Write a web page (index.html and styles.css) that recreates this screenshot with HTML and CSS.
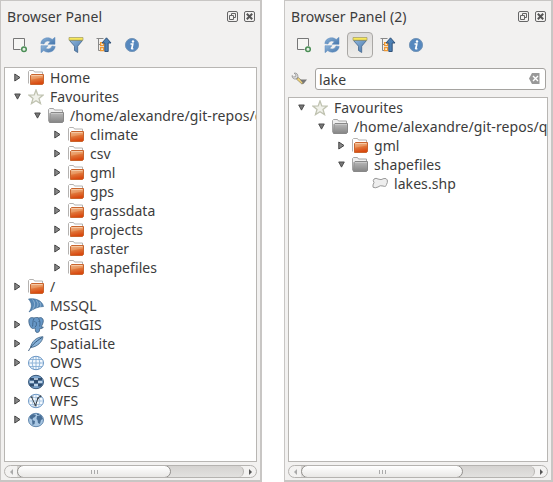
FILE: index.html
```
<!DOCTYPE html>
<html lang="en">
<head>
<meta charset="utf-8">
<title>Browser Panel</title>
<link rel="stylesheet" href="styles.css">
</head>
<body>
<svg class="defs" width="0" height="0" aria-hidden="true">
  <defs>
    <linearGradient id="orange" x1="0" y1="0" x2="0.25" y2="1"><stop offset="0" stop-color="#eeb48a"/><stop offset=".45" stop-color="#e9965f"/><stop offset=".55" stop-color="#e0763a"/><stop offset="1" stop-color="#d9480f"/></linearGradient>
    <linearGradient id="grey" x1="0" y1="0" x2="0" y2="1"><stop offset="0" stop-color="#b9b9b9"/><stop offset="1" stop-color="#858585"/></linearGradient>
    <linearGradient id="blue" x1="0" y1="0" x2="1" y2="1"><stop offset="0" stop-color="#8fb5da"/><stop offset="1" stop-color="#4475ab"/></linearGradient>
  </defs>
  <symbol id="right" viewBox="0 0 7 9"><path d="M.8 1v7L6 4.5z" fill="#888" stroke="#444"/></symbol>
  <symbol id="down" viewBox="0 0 8 9"><path d="M.8 1.6h6.4L4 7.5z" fill="#777" stroke="#444"/></symbol>
  <symbol id="folder" viewBox="0 0 16 16"><path d="M.5 13.5v-12l1-1h4l1 1.5h8v3" fill="#fff" stroke="#b4b2b0"/><path d="M2.5 5.5l1-1h12v9l-1 1h-12z" fill="url(#orange)" stroke="#c9652e"/><path d="M3.500 5.500h11" stroke="#f5c9a5"/></symbol>
  <symbol id="folder-grey" viewBox="0 0 16 16"><path d="M.5 13.5v-12l1-1h4l1 1.5h8v3" fill="#eee" stroke="#a5a5a5"/><path d="M2 5.5l1-1h12.5v9l-1 1H1.500z" fill="url(#grey)" stroke="#888"/><path d="M3 5.500h12" stroke="#c8c8c8"/></symbol>
  <symbol id="star" viewBox="0 0 16 16"><path d="M8 1l1.8 4.900 5.400.2-4.200 3.300 1.500 5.200L8 11.700l-4.500 2.900L5 9.400.8 6.100l5.400-.2z" fill="#f0f1ea" stroke="#c0c3b1" stroke-width="1.300"/></symbol>
  <symbol id="mssql" viewBox="0 0 16 16"><path d="M.5 1C7 0 14 2 15.500 8.500 10 8.500 5 11 1 14 4.500 9 4 5 .5 1z" fill="#5687b5" stroke="#39658f" stroke-width=".6"/><path d="M4.500 1.500c3 3 2.500 7 0 10M8 2.300c2.500 2 2.500 5 .7 7.200M11.500 4c1.500 1.500 1.500 3 .8 4.800" fill="none" stroke="#a9c5de" stroke-width=".7"/></symbol>
  <symbol id="postgis" viewBox="0 0 16 16"><path d="M1 2.500C2 0 5 .5 6 1c2-1 4-.5 5 0 2-1 4 0 4.300 2.500.2 2-1.300 5-2.300 6.500h2.300c-.5 1.500-2 1.700-3.500 1.500-.2 2-.4 4-2.500 4-2 0-2-2-2.100-4.500-1 .3-2.500 1-3.700 0C1.500 9 .3 5 1 2.500z" fill="#6797c6" stroke="#3c5f82" stroke-width=".8"/><path d="M6 1.500C4.500 4 5 7 4.500 9.500M10.500 1.500c1.500 2 2 5 1 8M7 10c2-1 1.500-4 1-5M6.300 4.500h1M10.500 4.500h1" fill="none" stroke="#3a5d80" stroke-width=".8"/></symbol>
  <symbol id="feather" viewBox="0 0 16 16"><path d="M2.500 11.500C3.500 6 8 1 15 .7 14.500 6 9 11 2.500 11.500z" fill="#88b2d8" stroke="#3c5f82" stroke-width=".8"/><path d="M.5 15C3 10 7 6 14 1.500" fill="none" stroke="#294c70" stroke-width=".9"/></symbol>
  <symbol id="globe" viewBox="0 0 16 16"><ellipse cx="8" cy="8" rx="7.500" ry="6.700" fill="#f4f9fe" stroke="#6995c4"/><path d="M8 1.500v13M.5 8h15M2 4.500h12M2 11.500h12M5.500 2q-2.800 6 0 12M10.500 2q2.800 6 0 12" fill="none" stroke="#7ea8d2" stroke-width=".8"/></symbol>
  <symbol id="wcs" viewBox="0 0 16 16"><ellipse cx="8" cy="8" rx="7.500" ry="6.700" fill="#7ca4cc" stroke="#39597c"/><path d="M2 4h12v2.500H2zM1 9.500h5v3H2.500zM10 9.500h5l-2 3h-3zM6 6.500h4v3H6z" fill="#304e70"/><path d="M6 5h4M2 8h4M10 8h4M6 11h4" stroke="#d4e4f2" stroke-width="1.500"/></symbol>
  <symbol id="wfs" viewBox="0 0 16 16"><ellipse cx="8" cy="8" rx="7.500" ry="6.700" fill="#f4f9fe" stroke="#6995c4"/><path d="M8 1.500v13M.5 8h15M2 4.500h12M2 11.500h12M5.500 2q-2.800 6 0 12M10.500 2q2.800 6 0 12" fill="none" stroke="#93b7da" stroke-width=".7"/><path d="M3.500 4l4 8.500L10 5l2.500-2" fill="none" stroke="#3a4249" stroke-width="1"/><path d="M2.700 3.200h1.800v1.800H2.700zM6.500 11.500h2v1.800h-2zM9 4.500h1.800v1.800H9zM11.500 2.500h1.800v1.800h-1.800z" fill="#454d55"/></symbol>
  <symbol id="wms" viewBox="0 0 16 16"><ellipse cx="8" cy="8" rx="7.500" ry="6.700" fill="#a9c7e3" stroke="#6187ad"/><path d="M2 4l3-2 3 1-1 2-2 1-.5 2-3-2zM4 8l3 1-.5 3-2 1zM9 4l4-1 2 4-2 1-1 4-2-1-.5-3-1-1zM9 2h2v1H9z" fill="#496f96"/></symbol>
  <symbol id="polygon" viewBox="0 0 16 16"><path d="M2 3q2-1.500 4 0 3 1.500 6-.5 2.500-.5 3.300 1.500.5 2.500-.8 4.500-.5 2.800-3.500 1.500-3-1-5 1-3 1.500-5 .2Q.5 9 2 6.500 .5 4.500 2 3z" fill="#eee" stroke="#999"/></symbol>
  <symbol id="add" viewBox="0 0 16 16"><path d="M1.500 1.500h11v11h-11z" fill="#f6f6f4" stroke="#777"/><circle cx="12" cy="12.300" r="3.400" fill="#f4f6f4"/><circle cx="12" cy="12.300" r="2.300" fill="#e5f2e6" stroke="#4b8d55" stroke-width="1.500"/></symbol>
  <symbol id="refresh" viewBox="0 0 16 16"><path d="M.8 6.500C1.200 3 4 .8 7.500.8c2 0 3.500.6 4.700 1.700L15 .3v7H8l2.300-2.500C8 3.300 5 4 4 7z" fill="url(#blue)" stroke="#5c8bbf" stroke-width=".5"/><path d="M15.200 9.500c-.4 3.500-3.200 5.700-6.700 5.700-2 0-3.500-.6-4.700-1.700L1 15.700v-7h7l-2.300 2.500c2.300 1.500 5.300.8 6.300-2.200z" fill="url(#blue)" stroke="#5c8bbf" stroke-width=".5"/></symbol>
  <symbol id="filter" viewBox="0 0 16 16"><path d="M1.500 3.500h13L9.700 9.200v6.300l-3.200-2V9.200z" fill="url(#blue)" stroke="#42658b" stroke-width=".8"/><path d="M1 .5h14v2.700H1z" fill="#f7e85a" stroke="#a09a60" stroke-width=".7"/></symbol>
  <symbol id="collapse" viewBox="0 0 16 16"><path d="M.5 1.500h7M2.500 2v11.500h3M2.500 7.500h3" fill="none" stroke="#888"/><path d="M4.600 5.600h3v3h-3zM4.600 10.600h3v3h-3z" fill="#fff1d5" stroke="#ef9833" stroke-width="1.300"/><path d="M10.500.8L15 6h-2.800v8.500H8.800V6H6z" fill="#4d80b4" stroke="#294a70" stroke-width=".9"/></symbol>
  <symbol id="info" viewBox="0 0 16 16"><circle cx="8" cy="8" r="6.600" fill="#5688be" stroke="#7898b9"/><circle cx="9" cy="4.500" r="1.200" fill="#fff"/><path d="M6.500 7H9l-1 4.800h1.400M8.700 7l-1.300 5.200" fill="none" stroke="#fff" stroke-width="1.300"/></symbol>
  <symbol id="float" viewBox="0 0 11 11"><rect x=".5" y=".5" width="10" height="10" rx="1.500" fill="none" stroke="#666"/><path d="M4.500 4V2.500h4v4H7M2.500 4.500h4v4h-4z" fill="none" stroke="#666"/></symbol>
  <symbol id="close" viewBox="0 0 11 11"><rect x=".5" y=".5" width="10" height="10" rx="1.500" fill="none" stroke="#666"/><path d="M2.800 2.800l5.400 5.400M8.200 2.800L2.800 8.200" stroke="#555" stroke-width="2"/></symbol>
  <symbol id="wrench" viewBox="0 0 16 16"><path d="M6 6l6 5.500" stroke="#77735c" stroke-width="3"/><path d="M6.500 6.500l5 4.500" stroke="#ecd07a" stroke-width="2"/><path d="M3 1.200l2 1.500-.5 2-2 .2L1 3.500C.8 6 3 7.500 5 7L7 5C7 2 5.500.5 3 1.200z" fill="#ddd" stroke="#888" stroke-width=".7"/><path d="M9 7.500h7L12.500 12z" fill="#777"/></symbol>
  <symbol id="clear" viewBox="0 0 11 11"><path d="M3 0h7.500v11H3L0 5.500z" fill="#999"/><path d="M4 3l5 5M9 3L4 8" stroke="#fff" stroke-width="1.400"/></symbol>
</svg>

<main class="desktop">
  <section class="panel panel-left">
    <header class="title"><h1>Browser Panel</h1><svg class="tiny"><use href="#float"/></svg><svg class="tiny"><use href="#close"/></svg></header>
    <nav class="toolbar">
      <span class="tool"><svg><use href="#add"/></svg></span><span class="tool"><svg><use href="#refresh"/></svg></span><span class="tool"><svg><use href="#filter"/></svg></span><span class="tool"><svg><use href="#collapse"/></svg></span><span class="tool"><svg><use href="#info"/></svg></span>
    </nav>
    <ul class="tree">
      <li><svg class="arrow"><use href="#right"/></svg><svg class="icon"><use href="#folder"/></svg><span>Home</span></li>
      <li><svg class="arrow"><use href="#down"/></svg><svg class="icon"><use href="#star"/></svg><span>Favourites</span></li>
      <li class="l2"><svg class="arrow"><use href="#down"/></svg><svg class="icon"><use href="#folder-grey"/></svg><span>/home/alexandre/git-repos/q</span></li>
      <li class="l3"><svg class="arrow"><use href="#right"/></svg><svg class="icon"><use href="#folder"/></svg><span>climate</span></li>
      <li class="l3"><svg class="arrow"><use href="#right"/></svg><svg class="icon"><use href="#folder"/></svg><span>csv</span></li>
      <li class="l3"><svg class="arrow"><use href="#right"/></svg><svg class="icon"><use href="#folder"/></svg><span>gml</span></li>
      <li class="l3"><svg class="arrow"><use href="#right"/></svg><svg class="icon"><use href="#folder"/></svg><span>gps</span></li>
      <li class="l3"><svg class="arrow"><use href="#right"/></svg><svg class="icon"><use href="#folder"/></svg><span>grassdata</span></li>
      <li class="l3"><svg class="arrow"><use href="#right"/></svg><svg class="icon"><use href="#folder"/></svg><span>projects</span></li>
      <li class="l3"><svg class="arrow"><use href="#right"/></svg><svg class="icon"><use href="#folder"/></svg><span>raster</span></li>
      <li class="l3"><svg class="arrow"><use href="#right"/></svg><svg class="icon"><use href="#folder"/></svg><span>shapefiles</span></li>
      <li><svg class="arrow"><use href="#right"/></svg><svg class="icon"><use href="#folder"/></svg><span>/</span></li>
      <li><svg class="arrow"></svg><svg class="icon"><use href="#mssql"/></svg><span>MSSQL</span></li>
      <li><svg class="arrow"><use href="#right"/></svg><svg class="icon"><use href="#postgis"/></svg><span>PostGIS</span></li>
      <li><svg class="arrow"><use href="#right"/></svg><svg class="icon"><use href="#feather"/></svg><span>SpatiaLite</span></li>
      <li><svg class="arrow"><use href="#right"/></svg><svg class="icon"><use href="#globe"/></svg><span>OWS</span></li>
      <li><svg class="arrow"></svg><svg class="icon"><use href="#wcs"/></svg><span>WCS</span></li>
      <li><svg class="arrow"><use href="#right"/></svg><svg class="icon"><use href="#wfs"/></svg><span>WFS</span></li>
      <li><svg class="arrow"><use href="#right"/></svg><svg class="icon"><use href="#wms"/></svg><span>WMS</span></li>
    </ul>
    <div class="scroll"><i class="back"></i><div class="track"><div class="thumb"><i class="grip"></i></div></div><i class="next"></i></div>
  </section>

  <section class="panel panel-right">
    <header class="title"><h1>Browser Panel (2)</h1><svg class="tiny"><use href="#float"/></svg><svg class="tiny"><use href="#close"/></svg></header>
    <nav class="toolbar">
      <span class="tool"><svg><use href="#add"/></svg></span><span class="tool"><svg><use href="#refresh"/></svg></span><span class="tool active"><svg><use href="#filter"/></svg></span><span class="tool"><svg><use href="#collapse"/></svg></span><span class="tool"><svg><use href="#info"/></svg></span>
    </nav>
    <div class="search"><svg class="wrench"><use href="#wrench"/></svg><div class="field"><span>lake</span><svg class="tiny"><use href="#clear"/></svg></div></div>
    <ul class="tree">
      <li><svg class="arrow"><use href="#down"/></svg><svg class="icon"><use href="#star"/></svg><span>Favourites</span></li>
      <li class="l2"><svg class="arrow"><use href="#down"/></svg><svg class="icon"><use href="#folder-grey"/></svg><span>/home/alexandre/git-repos/q</span></li>
      <li class="l3"><svg class="arrow"><use href="#right"/></svg><svg class="icon"><use href="#folder"/></svg><span>gml</span></li>
      <li class="l3"><svg class="arrow"><use href="#down"/></svg><svg class="icon"><use href="#folder-grey"/></svg><span>shapefiles</span></li>
      <li class="l4"><svg class="arrow"></svg><svg class="icon"><use href="#polygon"/></svg><span>lakes.shp</span></li>
    </ul>
    <div class="scroll"><i class="back"></i><div class="track"><div class="thumb"><i class="grip"></i></div></div><i class="next"></i></div>
  </section>
</main>
</body>
</html>
```
FILE: styles.css
```
* { box-sizing: border-box; }
body { margin: 0; background: #fff; color: #3c3c3c; font: 14px/19px "Noto Sans", "Open Sans", sans-serif; letter-spacing: .07px; overflow: hidden; }
.defs { position: absolute; }
svg { display: block; flex: none; }
.desktop { display: flex; gap: 22px; height: 482px; }
.panel { display: flex; flex-direction: column; height: 482px; padding: 0 3px 2px; background: #f2f1f0; border: 1px solid #c8c6c4; border-width: 1px 2px 2px 1px; }
.panel-left { width: 262px; }
.panel-right { width: 269px; }
.title { display: flex; align-items: center; gap: 6px; height: 31px; padding: 0 2px 0 3px; flex: none; }
.title h1 { flex: 1; margin: 0; font: inherit; }
.tiny { width: 11px; height: 11px; }
.toolbar { display: flex; gap: 2px; height: 35px; padding: 0 3px; align-items: flex-start; flex: none; }
.tool { display: flex; width: 26px; height: 26px; align-items: center; justify-content: center; border: 1px solid transparent; border-radius: 4px; }
.tool svg { width: 16px; height: 16px; }
.tool.active { border-color: #aaa8a5; background: linear-gradient(#dddbd9, #eeedeb); }
.tree { flex: 1; min-height: 0; margin: 0; padding: 0; list-style: none; overflow: hidden; border: 1px solid #b8b6b3; background: #fff; }
.tree li { display: flex; height: 19px; align-items: center; padding-left: 9px; white-space: nowrap; }
.tree .l2 { padding-left: 29px; }
.tree .l3 { padding-left: 49px; }
.tree .l4 { padding-left: 69px; }
.arrow { width: 7px; height: 9px; margin-right: 7px; }
.icon { width: 16px; height: 16px; margin-right: 6px; }
.search { display: flex; height: 30px; align-items: flex-start; padding: 1px 2px 0 3px; flex: none; }
.wrench { width: 16px; height: 16px; margin: 4px 8px 0 0; }
.field { display: flex; flex: 1; height: 22px; align-items: center; justify-content: space-between; padding: 0 5px 0 3px; border: 1px solid #a5a3a0; border-radius: 3px; background: #fff; }
.field .tiny { margin-top: -2px; }
.scroll { display: flex; height: 13px; margin-top: 3px; flex: none; border: 1px solid #b5b3b0; border-radius: 7px; overflow: hidden; background: #f3f2f1; }
.back, .next { width: 12px; display: flex; align-items: center; justify-content: center; }
.back::before, .next::before { content: ""; border: solid transparent; border-width: 3px; }
.back::before { border-right-color: #aaa; border-left-width: 0; }
.next::before { border-left-color: #555; border-right-width: 0; }
.track { flex: 1; background: linear-gradient(#d5d3d1, #e2e1df); border-radius: 0 6px 6px 0; border-right: 1px solid #b5b3b0; }
.thumb { display: flex; width: 154px; height: 13px; margin-top: -1px; align-items: center; justify-content: center; border: 1px solid #92908d; border-radius: 7px; background: linear-gradient(#fff, #e9e8e6); }
.panel-right .thumb { width: 162px; }
.grip { width: 7px; height: 4px; background: repeating-linear-gradient(90deg, #aaa 0 1px, transparent 1px 3px); }
```
